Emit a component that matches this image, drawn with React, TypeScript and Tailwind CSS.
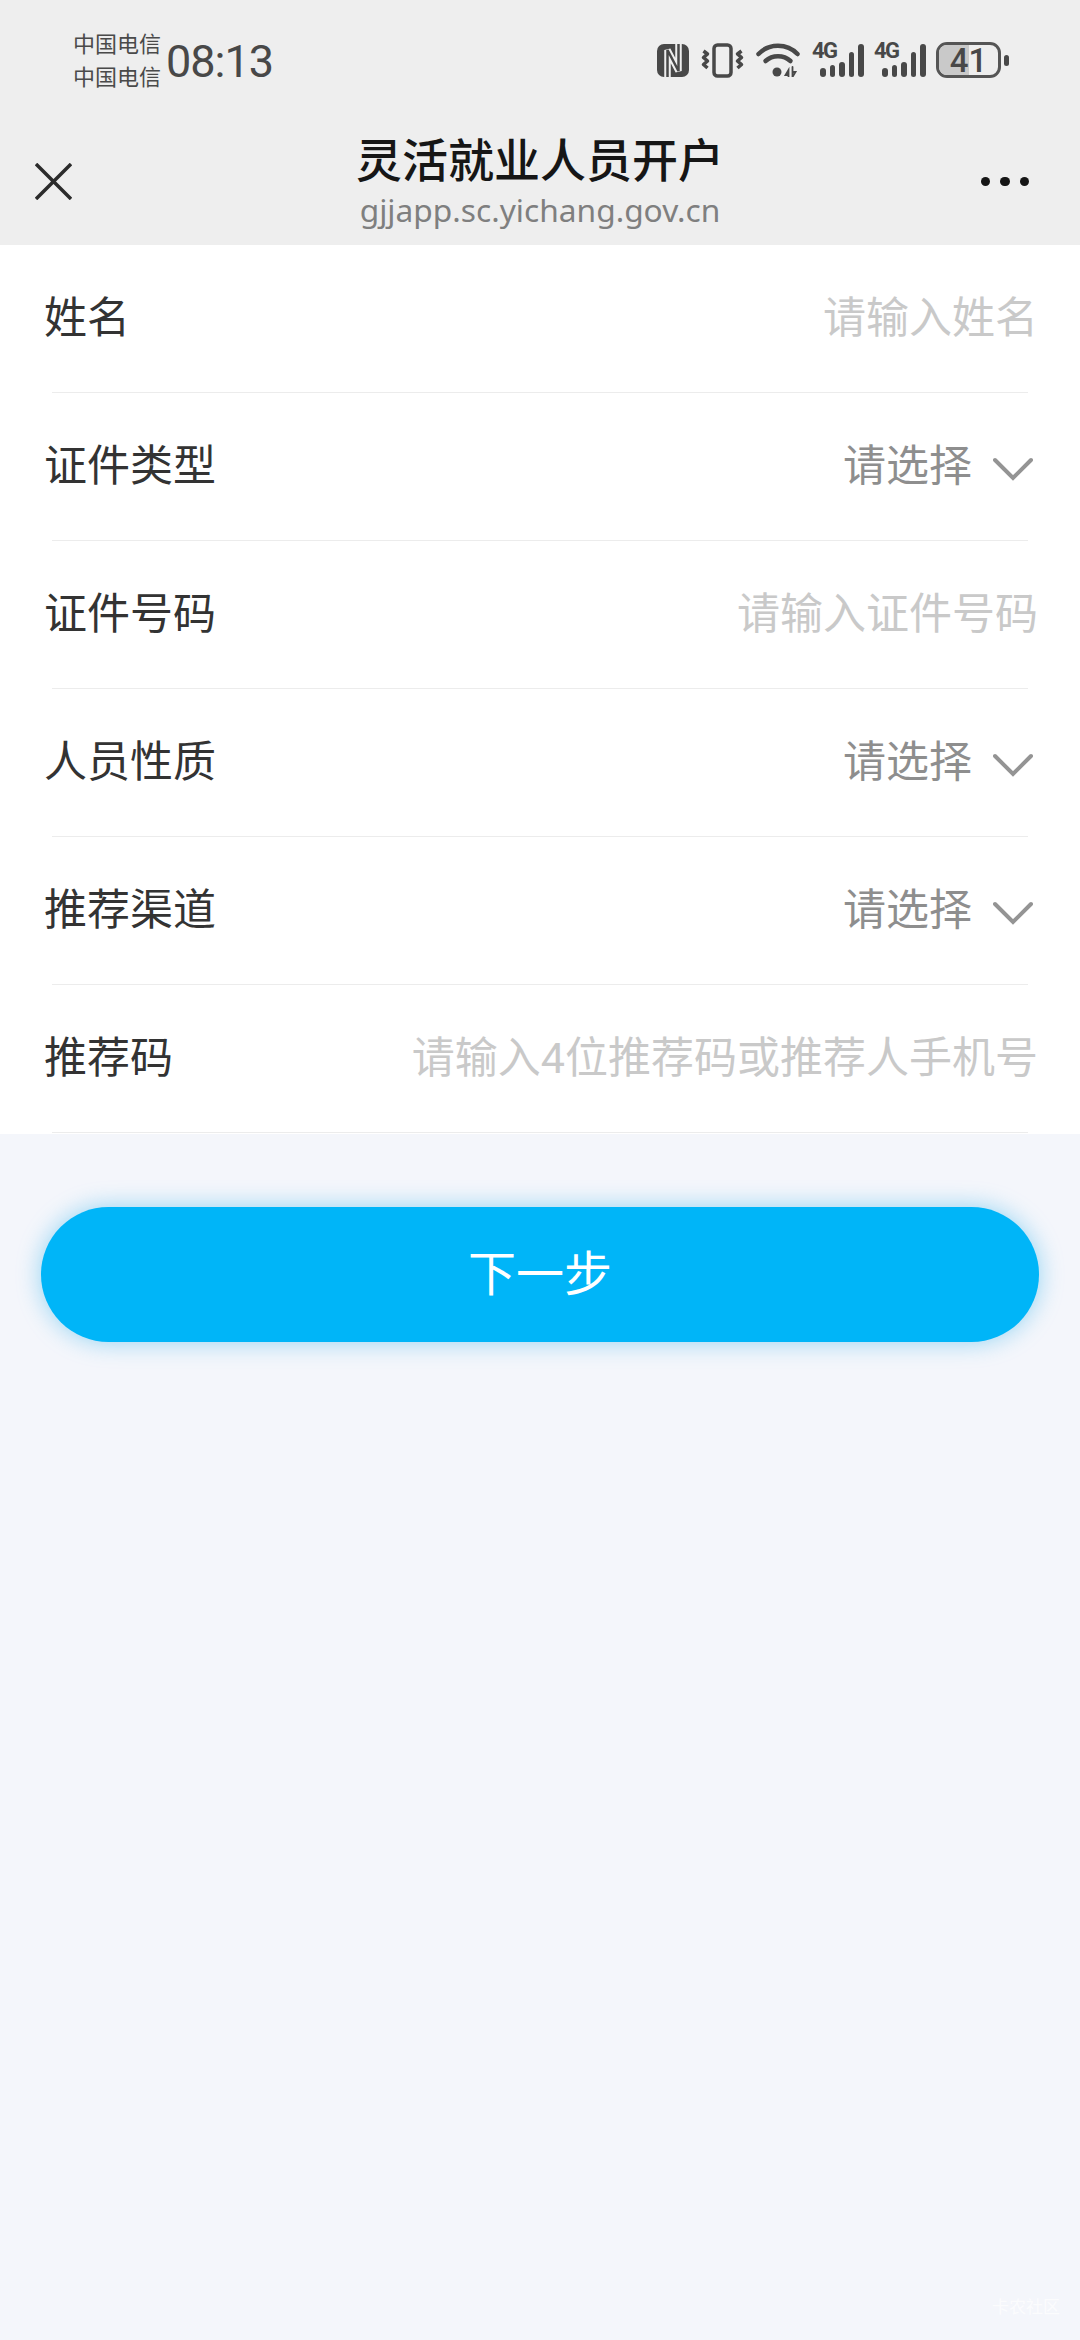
const FONT = "font-['Roboto','Noto_Sans_CJK_SC',sans-serif]";

const fields = [
  { label: '姓名', value: '请输入姓名', select: false },
  { label: '证件类型', value: '请选择', select: true },
  { label: '证件号码', value: '请输入证件号码', select: false },
  { label: '人员性质', value: '请选择', select: true },
  { label: '推荐渠道', value: '请选择', select: true },
  { label: '推荐码', value: '请输入4位推荐码或推荐人手机号', select: false },
];

function NfcIcon() {
  return (
    <svg width="32" height="33" viewBox="0 0 32 33" fill="none">
      <rect width="32" height="33" rx="7" fill="#484848" />
      <path d="M10.500 33V6l11 21V0" stroke="#eeeeee" strokeWidth="6.500" strokeLinejoin="miter" />
      <path d="M10.500 33V6l11 21V0" stroke="#484848" strokeWidth="2.500" strokeLinejoin="miter" />
    </svg>
  );
}

function VibrateIcon() {
  return (
    <svg width="43" height="35" viewBox="0 0 43 35" fill="none" stroke="#484848">
      <rect x="13" y="2" width="17" height="31" rx="3.500" strokeWidth="3.500" />
      <path d="M2.500 8l4 3-4 3.500 4 3.500-4 3.500 4 3.500" strokeWidth="3.500" strokeLinejoin="round" />
      <path d="M40.500 8l-4 3 4 3.500-4 3.500 4 3.500-4 3.500" strokeWidth="3.500" strokeLinejoin="round" />
    </svg>
  );
}

function WifiIcon() {
  return (
    <svg width="44" height="34" viewBox="0 0 44 34" fill="none" stroke="#484848" strokeLinecap="round">
      <path d="M2.500 11C13 0 31 0 41.500 11" strokeWidth="4.500" />
      <path d="M9.500 18c7-6.500 18-6.500 25 0" strokeWidth="4.500" />
      <circle cx="21" cy="29" r="4.500" fill="#484848" stroke="none" />
      <path d="M32.500 34v-7l-3 5h3M36.500 24v10l3-5h-3" strokeWidth="1.800" />
    </svg>
  );
}

function SignalIcon() {
  return (
    <div className="relative h-[34px] w-[50px]">
      <span className="absolute left-0 top-[-4px] font-['Roboto',sans-serif] text-[22px] font-bold leading-[24px] tracking-[-1.500px] text-[#484848]">
        4G
      </span>
      <div className="absolute bottom-0 left-[8px] flex items-end gap-[4px]">
        {[9, 12, 15, 25, 33].map((h) => (
          <div key={h} style={{ height: h }} className="w-[5.500px] rounded-full bg-[#484848]" />
        ))}
      </div>
    </div>
  );
}

function BatteryIcon() {
  return (
    <div className="flex items-center gap-[3px]">
      <div className="relative h-[36px] w-[65px] overflow-hidden rounded-[11px] border-[3px] border-[#555]">
        <div className="h-full w-[50%] bg-[#c9c9c9]" />
        <span className="absolute inset-0 flex items-center justify-center font-['Roboto',sans-serif] text-[33px] font-medium leading-none text-[#484848]">
          41
        </span>
      </div>
      <div className="h-[11px] w-[5px] rounded-full bg-[#484848]" />
    </div>
  );
}

function StatusBar() {
  return (
    <div className="flex h-[120px] items-center justify-between pl-[73px] pr-[71px]">
      <div className="flex items-center gap-[5px]">
        <div className="mt-[1px] flex flex-col text-[22px] leading-[33px] text-[#4a4a4a]">
          <span>中国电信</span>
          <span>中国电信</span>
        </div>
        <span className="mt-[2px] font-['Roboto',sans-serif] text-[45px] leading-none tracking-[-1px] text-[#484848]">
          08:13
        </span>
      </div>
      <div className="flex items-center gap-[12px]">
        <NfcIcon />
        <VibrateIcon />
        <WifiIcon />
        <SignalIcon />
        <SignalIcon />
        <BatteryIcon />
      </div>
    </div>
  );
}

function NavBar() {
  return (
    <div className="grid h-[125px] grid-cols-[1fr_auto_1fr] items-center px-[35px]">
      <svg width="37" height="37" viewBox="0 0 37 37" stroke="#2b2b2b" strokeWidth="3.500" className="mt-[-2px]">
        <path d="M1 1l35 35M36 1L1 36" />
      </svg>
      <div className="flex flex-col items-center">
        <span className="mt-[-3px] text-[46px] font-medium leading-[56px] text-[#161616]">灵活就业人员开户</span>
        <span className="mt-[1px] font-['Noto_Sans',sans-serif] text-[31.700px] leading-[40px] text-[#7f7f7f]">
          gjjapp.sc.yichang.gov.cn
        </span>
      </div>
      <div className="mt-[-2px] mr-[16px] flex justify-end gap-[10px]">
        <div className="size-[9.500px] rounded-full bg-[#151515]" />
        <div className="size-[9.500px] rounded-full bg-[#151515]" />
        <div className="size-[9.500px] rounded-full bg-[#151515]" />
      </div>
    </div>
  );
}

function FieldRow({ label, value, select }: { label: string; value: string; select: boolean }) {
  return (
    <div>
      <div className="flex h-[147px] items-center justify-between pl-[44px] pr-[42px]">
        <span className="text-[43px] text-[#333333]">{label}</span>
        {select ? (
          <div className="flex items-center gap-[21px]">
            <span className="text-[43px] text-[#8e8e8e]">{value}</span>
            <svg width="40" height="24" viewBox="0 0 40 24" fill="none" stroke="#949494" strokeWidth="4" strokeLinecap="round" className="mt-[4px] mr-[5px]">
              <path d="M2 3l18 18L38 3" />
            </svg>
          </div>
        ) : (
          <span className="text-[43px] text-[#c9c9c9]">{value}</span>
        )}
      </div>
      <div className="mx-[52px] h-px bg-[#ececec]" />
    </div>
  );
}

export default function App() {
  return (
    <div className={`${FONT} relative flex min-h-[2340px] flex-col bg-[#f4f6fb]`}>
      <div className="bg-[#eeeeee]">
        <StatusBar />
        <NavBar />
      </div>
      <div className="bg-white pb-[1px]">
        {fields.map((field) => (
          <FieldRow key={field.label} {...field} />
        ))}
      </div>
      <div className="px-[41px] pt-[73px]">
        <button className="flex h-[135px] w-full items-center justify-center rounded-full bg-[#00b5f8] text-[48px] text-white shadow-[0_0_24px_rgba(0,160,235,0.4)]">
          下一步
        </button>
      </div>
      <span className="absolute bottom-[20px] right-[20px] text-[17px] text-white/70">卡农社区</span>
    </div>
  );
}
